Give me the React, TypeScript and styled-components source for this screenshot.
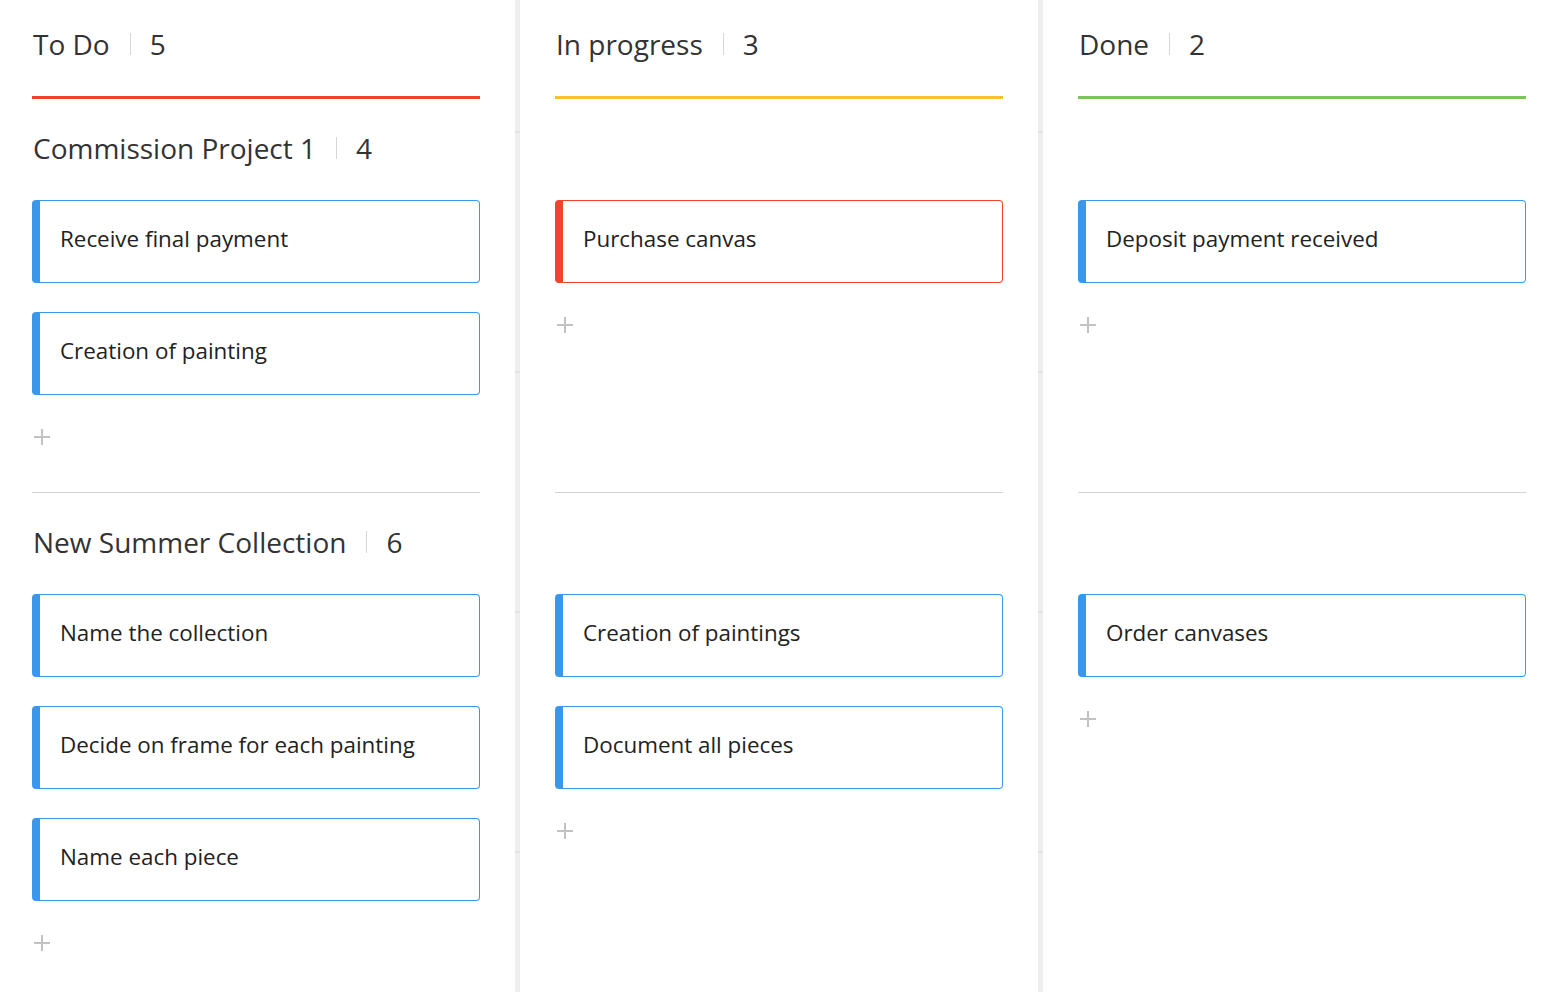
import React from "react";
import styled, { createGlobalStyle } from "styled-components";

const GlobalStyle = createGlobalStyle`
  html, body {
    margin: 0;
    padding: 0;
    background: #ffffff;
  }
  body {
    font-family: "Open Sans", "Noto Sans", "Liberation Sans", sans-serif;
    color: #333333;
    -webkit-font-smoothing: antialiased;
  }
  * { box-sizing: border-box; }
`;

const Board = styled.div`
  display: grid;
  grid-template-columns: 515px 518px 515px;
  grid-template-rows: auto auto 1fr;
  column-gap: 5px;
  min-height: 100vh;
  background: repeating-linear-gradient(
    to bottom,
    #eeeeee 0px,
    #eeeeee 131px,
    #e2e2e2 131px,
    #e2e2e2 133px,
    #eeeeee 133px,
    #eeeeee 240px
  );
`;

const Cell = styled.div<{ $pl: number; $pr: number }>`
  background: #ffffff;
  padding: 0 ${(p) => p.$pr}px 0 ${(p) => p.$pl}px;
  display: flex;
  flex-direction: column;
`;

const ColumnHeader = styled.div<{ $color: string }>`
  padding-top: 25px;
  border-bottom: 3px solid ${(p) => p.$color};
`;

const TitleRow = styled.div<{ $mb: number }>`
  display: flex;
  align-items: center;
  height: 38px;
  margin-bottom: ${(p) => p.$mb}px;
  font-size: 28px;
  line-height: 38px;
  color: #333333;
  white-space: nowrap;
`;

const TitleText = styled.span`
  padding-left: 1px;
`;

const CountBar = styled.span`
  display: inline-block;
  width: 1px;
  height: 22px;
  background: #d6d6d6;
  margin: 0 19px 0 20px;
`;

const Count = styled.span``;

const Lane = styled.div<{ $divided: boolean }>`
  flex: 1;
  display: flex;
  flex-direction: column;
  padding: 30px 0 ${(p) => (p.$divided ? 43 : 0)}px;
  border-bottom: ${(p) => (p.$divided ? "1px solid #d2d2d2" : "none")};
`;

const CardList = styled.div`
  display: flex;
  flex-direction: column;
  gap: 29px;
`;

const Card = styled.div<{ $color: string }>`
  height: 83px;
  display: flex;
  align-items: center;
  border: 1px solid ${(p) => p.$color};
  border-left: 8px solid ${(p) => p.$color};
  border-radius: 4px;
  padding: 0 0 6px 20px;
  font-size: 22.4px;
  color: #222222;
  background: #ffffff;
  white-space: nowrap;
`;

const AddButton = styled.button`
  margin-top: 30px;
  width: 20px;
  height: 24px;
  padding: 0;
  border: none;
  background: none;
  display: flex;
  align-items: center;
  justify-content: center;
  cursor: pointer;
`;

const PlusIcon = () => (
  <svg width="18" height="18" viewBox="0 0 18 18" aria-hidden="true">
    <path d="M9 1v16M1 9h16" stroke="#c2c2c2" strokeWidth="2" fill="none" />
  </svg>
);

const BLUE = "#3a98ec";
const RED = "#f2432d";

type Column = { title: string; count: number; color: string; pl: number; pr: number };

const columns: Column[] = [
  { title: "To Do", count: 5, color: "#f1412d", pl: 32, pr: 35 },
  { title: "In progress", count: 3, color: "#fbc02d", pl: 35, pr: 35 },
  { title: "Done", count: 2, color: "#78c65a", pl: 35, pr: 32 },
];

type Task = { text: string; color: string };
type LaneData = { title: string; count: number; cells: Task[][] };

const lanes: LaneData[] = [
  {
    title: "Commission Project 1",
    count: 4,
    cells: [
      [
        { text: "Receive final payment", color: BLUE },
        { text: "Creation of painting", color: BLUE },
      ],
      [{ text: "Purchase canvas", color: RED }],
      [{ text: "Deposit payment received", color: BLUE }],
    ],
  },
  {
    title: "New Summer Collection",
    count: 6,
    cells: [
      [
        { text: "Name the collection", color: BLUE },
        { text: "Decide on frame for each painting", color: BLUE },
        { text: "Name each piece", color: BLUE },
      ],
      [
        { text: "Creation of paintings", color: BLUE },
        { text: "Document all pieces", color: BLUE },
      ],
      [{ text: "Order canvases", color: BLUE }],
    ],
  },
];

export default function App() {
  return (
    <>
      <GlobalStyle />
      <Board>
        {columns.map((c) => (
          <Cell key={`h-${c.title}`} $pl={c.pl} $pr={c.pr}>
            <ColumnHeader $color={c.color}>
              <TitleRow $mb={33}>
                <TitleText>{c.title}</TitleText>
                <CountBar />
                <Count>{c.count}</Count>
              </TitleRow>
            </ColumnHeader>
          </Cell>
        ))}
        {lanes.map((lane, li) =>
          columns.map((c, ci) => (
            <Cell key={`l-${li}-${ci}`} $pl={c.pl} $pr={c.pr}>
              <Lane $divided={li < lanes.length - 1}>
                <TitleRow $mb={33}>
                  {ci === 0 && (
                    <>
                      <TitleText>{lane.title}</TitleText>
                      <CountBar />
                      <Count>{lane.count}</Count>
                    </>
                  )}
                </TitleRow>
                <CardList>
                  {lane.cells[ci].map((t) => (
                    <Card key={t.text} $color={t.color}>
                      {t.text}
                    </Card>
                  ))}
                </CardList>
                <AddButton aria-label="Add task">
                  <PlusIcon />
                </AddButton>
              </Lane>
            </Cell>
          ))
        )}
      </Board>
    </>
  );
}
